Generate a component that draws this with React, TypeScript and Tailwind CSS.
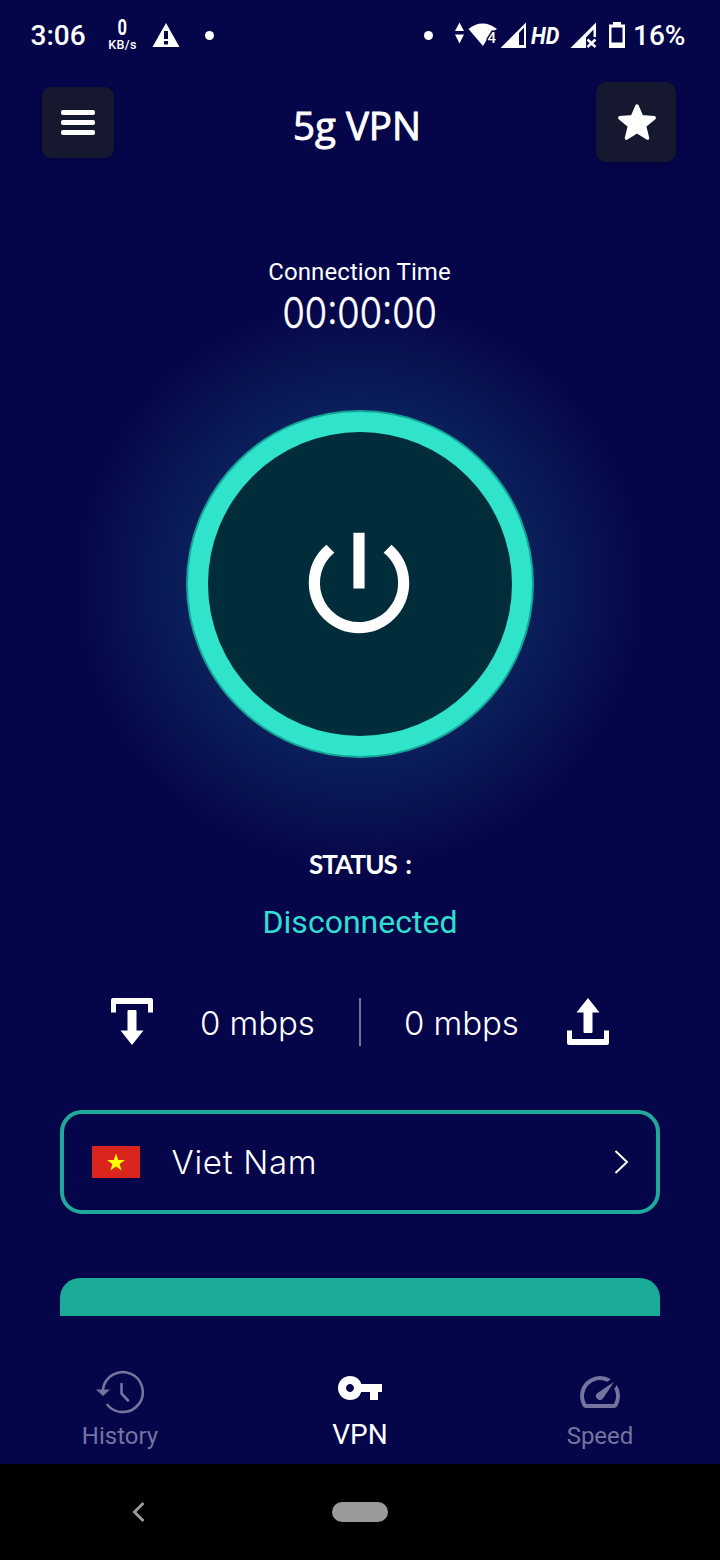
import { ReactNode } from 'react';
import { MdPowerSettingsNew, MdSpeed, MdVpnKey } from 'react-icons/md';

function StatusBar() {
    return (
        <div className="flex h-[72px] items-center text-[28px] font-medium">
            <span className="ml-[30.500px] w-[56px] whitespace-nowrap">3:06</span>
            <div className="ml-[20px] flex w-[32px] flex-col items-center whitespace-nowrap">
                <span className="h-[18px] scale-x-75 text-[22px] leading-[16px] font-bold">0</span>
                <span className="h-[14px] text-[12.500px] leading-[14px] font-medium tracking-[0.3px]">KB/s</span>
            </div>
            <svg className="ml-[13px]" width="28" height="28" viewBox="0 0 28 28" fill="white">
                <path fillRule="evenodd" d="M14 1l13.500 24H.5zM12 9v8h4V9zM12 19v3.500h4V19z" />
            </svg>
            <span className="-mt-[2px] ml-[25px] h-[9px] w-[9px] rounded-full bg-white" />
            <span className="-mt-[2px] ml-auto h-[9px] w-[9px] rounded-full bg-white" />
            <svg className="ml-[20px]" width="77" height="28" viewBox="452 22 77 28" fill="white">
                <path d="M458.500 22.500l4.500 8.500h-9zM454 34.500h9l-4.500 9z" />
                <path d="M467.500 29c8-7.500 20-7.500 28.500 0l-6 4-5 8-3 5z" />
                <text x="486.500" y="43" fontSize="15" fontWeight="500" stroke="#05054a" strokeWidth="3" paintOrder="stroke">4</text>
                <path fillRule="evenodd" d="M525 22.500V48h-25.500zM518 33v12h5V27.500z" />
            </svg>
            <span className="-mt-[1px] ml-[1px] w-[32px] origin-left scale-x-[.9] text-[24px] font-bold italic">HD</span>
            <svg className="ml-[6px]" width="30" height="28" viewBox="568 22 30 28" fill="white">
                <path d="M595 22.500V37h-2.500v-7.500L585 37.500V48h-15.500z" />
                <path d="M586.500 39.500l8 7.500M594.500 39.500l-8 7.500" stroke="white" strokeWidth="2.500" />
            </svg>
            <svg className="ml-[9px]" width="18" height="28" viewBox="608 22 18 28" fill="white">
                <path fillRule="evenodd" d="M613 22h8v2.500h4V48h-16V24.500h4zM611.500 27.500v15h11v-15z" />
            </svg>
            <span className="mr-[35px] ml-[7px] w-[52px] whitespace-nowrap">16%</span>
        </div>
    );
}

function AppHeader() {
    return (
        <header className="flex h-[110px] items-center justify-between border-b border-[#03033f] pr-[44px] pb-[9px] pl-[42px]">
            <button className="mt-[1px] flex h-[71px] w-[72px] flex-col items-center justify-center gap-[5px] rounded-[9px] bg-[#16182f] shadow-md">
                <span className="h-[5px] w-[34px] rounded-[2px] bg-white" />
                <span className="h-[5px] w-[34px] rounded-[2px] bg-white" />
                <span className="h-[5px] w-[34px] rounded-[2px] bg-white" />
            </button>
            <h1 className="mt-[8px] ml-[4px] font-['Open_Sans',sans-serif] text-[38.500px] font-normal [-webkit-text-stroke:0.9px_white]">5g VPN</h1>
            <button className="-mt-[1px] flex h-[80px] w-[80px] items-center justify-center rounded-[10px] bg-[#16182f] shadow-md">
                <svg className="ml-[1px]" width="40" height="40" viewBox="0 0 40 40" fill="white" stroke="white" strokeWidth="3.500" strokeLinejoin="round">
                    <path d="M20 4l4.600 10.800 12.600 1-9.700 8 3 12.300L20 29.500l-10.500 6.600 3-12.300-9.700-8 12.600-1z" />
                </svg>
            </button>
        </header>
    );
}

function SpeedStats() {
    return (
        <div className="mt-[56px] flex h-[48px] shrink-0 items-center px-[110px]">
            <svg width="44" height="48" viewBox="0 0 44 48" fill="white">
                <path d="M1 2a2 2 0 0 1 2-2h38a2 2 0 0 1 2 2v12.500h-5V6H6v8.500H1z" />
                <path d="M17.500 13a1 1 0 0 1 1-1h7a1 1 0 0 1 1 1v19.500h7L22 47 10.500 32.500h7z" />
            </svg>
            <span className="mt-[3px] ml-[46px] w-[115px] font-['Inter',sans-serif] text-[33px] font-light tracking-[-0.1px] whitespace-nowrap">0 mbps</span>
            <span className="ml-[44px] h-[48px] w-[2px] bg-[#73739b]" />
            <span className="mt-[3px] ml-[43px] w-[116px] font-['Inter',sans-serif] text-[33px] font-light tracking-[-0.1px] whitespace-nowrap">0 mbps</span>
            <svg className="ml-auto" width="44" height="48" viewBox="0 0 44 48" fill="white">
                <path d="M1 45a2 2 0 0 0 2 2h38a2 2 0 0 0 2-2V32.500h-5V41H6v-8.500H1z" />
                <path d="M17.500 34a1 1 0 0 0 1 1h7a1 1 0 0 0 1-1V14.500h7L22 0 10.500 14.500h7z" />
            </svg>
        </div>
    );
}

function CountryPicker() {
    return (
        <div className="mx-[60px] mt-[64px] flex h-[104px] shrink-0 items-center rounded-[22px] border-4 border-[#1fa99b] pr-[26px] pl-[28px]">
            <svg width="48" height="32" viewBox="0 0 48 32">
                <path fill="#da251d" d="M0 0h48v32H0z" />
                <path fill="#ff0" d="M24 7.500l2.200 6.400h6.800l-5.400 4 2 6.500-5.600-3.900-5.600 3.900 2-6.500-5.400-4h6.800z" />
            </svg>
            <span className="mt-[2px] ml-[31.500px] font-['Inter',sans-serif] text-[33px] font-light tracking-[0.7px]">Viet Nam</span>
            <svg className="ml-auto" width="18" height="26" viewBox="0 0 18 26" fill="none" stroke="white" strokeWidth="2">
                <path d="M3.500 2l11.500 11L3.500 24" />
            </svg>
        </div>
    );
}

function HistoryIcon() {
    return (
        <svg width="50" height="44" viewBox="95 1370 50 44" fill="none" stroke="currentColor" strokeWidth="2.600" strokeLinecap="round">
            <path d="M103 1389a20 20 0 1 1 4.500 16" />
            <path d="M121.500 1384v9.500l6.500 7" />
            <path d="M96 1389.500h14l-7 6.500z" fill="currentColor" stroke="none" />
        </svg>
    );
}

function NavItem({ icon, label, active = false }: { icon: ReactNode; label: string; active?: boolean }) {
    return (
        <div className={`flex w-[240px] flex-col items-center ${active ? 'text-white' : 'text-[#74749f]'}`}>
            <div className={`flex h-[48px] items-center ${active ? 'pb-[8px]' : ''}`}>{icon}</div>
            <span className={active ? '-mt-[1px] text-[28px] leading-[40px]' : 'text-[24px] leading-[40px]'}>{label}</span>
        </div>
    );
}

export default function App() {
    return (
        <div className="flex h-[1560px] w-[720px] flex-col overflow-hidden bg-[#05054a] font-['Roboto',sans-serif] text-white">
            <StatusBar />
            <AppHeader />

            <main className="flex h-[1134px] flex-col overflow-hidden bg-[radial-gradient(circle_286px_at_360px_402px,#0a235f_0%,#0a1f5b_60%,#08124f_82%,#05054a_100%)]">
                <div className="mt-[76px] pr-[1px] text-center text-[24px] leading-[28px] tracking-[0.1px]">Connection Time</div>
                <div className="mt-[5px] text-center font-['Inter',sans-serif] text-[42px] leading-[44px] font-light">
                    <span className="inline-block scale-x-[.86] [-webkit-text-stroke:0.6px_white]">00:00:00</span>
                </div>

                <button className="mx-auto mt-[75px] flex h-[348px] w-[348px] shrink-0 items-center justify-center rounded-full border-2 border-[#13a698] bg-[#30e4cc]">
                    <span className="flex h-[304px] w-[304px] items-center justify-center rounded-full bg-[#012c39] pr-[2px] pb-[2px]">
                        <MdPowerSettingsNew size={134} />
                    </span>
                </button>

                <div className="mt-[90px] text-center font-['Lato',sans-serif] text-[26px] leading-[32px] font-bold tracking-[-0.9px] [word-spacing:3px]">STATUS :</div>
                <div className="mt-[22px] text-center text-[32px] leading-[40px] text-[#30dfd0]">Disconnected</div>

                <SpeedStats />
                <CountryPicker />
                <div className="mx-[60px] mt-[64px] h-[38px] shrink-0 rounded-t-[20px] bg-[#1aab99]" />
            </main>

            <nav className="flex h-[148px] pt-[52px]">
                <NavItem icon={<HistoryIcon />} label="History" />
                <NavItem icon={<MdVpnKey size={48} />} label="VPN" active />
                <NavItem icon={<MdSpeed size={48} />} label="Speed" />
            </nav>

            <div className="flex h-[96px] items-center bg-black">
                <svg className="ml-[130px]" width="18" height="24" viewBox="0 0 18 24" fill="none" stroke="#9a9a9a" strokeWidth="3">
                    <path d="M13.500 3L4.500 12l9 9" />
                </svg>
                <span className="ml-[184px] h-[20px] w-[56px] rounded-full bg-[#9a9a9a]" />
            </div>
        </div>
    );
}
